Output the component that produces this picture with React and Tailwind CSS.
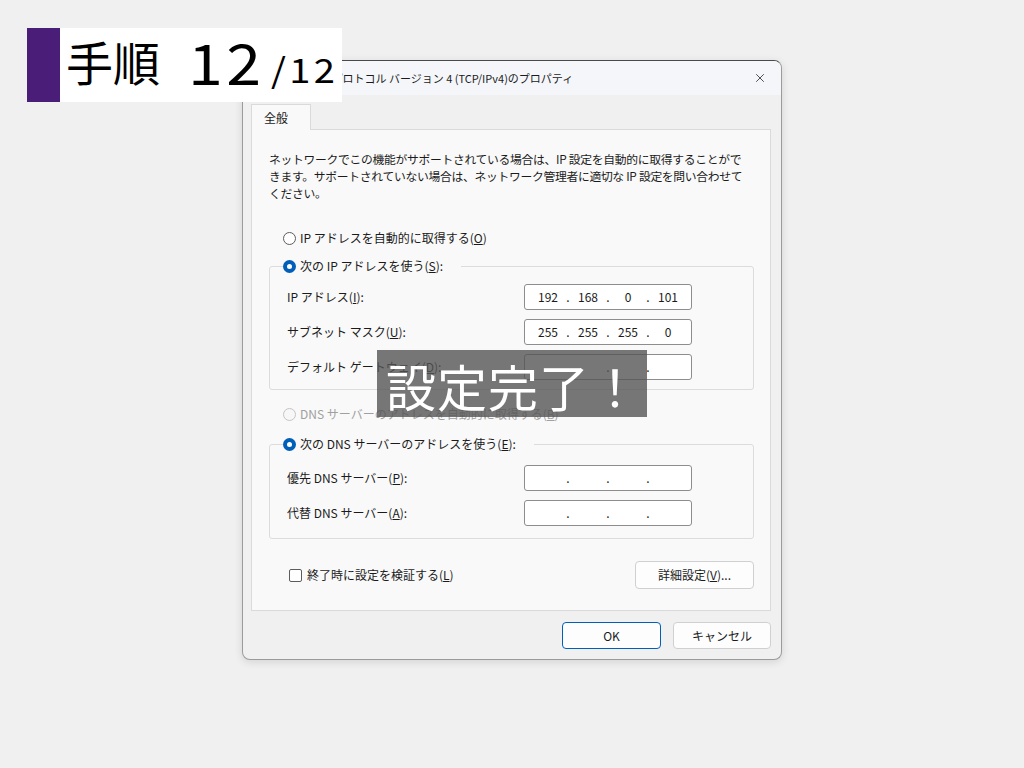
import { X } from "lucide-react";

const jp = "font-['Noto_Sans_CJK_JP',sans-serif]";

const Radio = ({ checked, disabled }) =>
  checked ? (
    <span className="flex h-[13px] w-[13px] shrink-0 items-center justify-center rounded-full bg-[#005fb8]">
      <span className="h-[5px] w-[5px] rounded-full bg-white" />
    </span>
  ) : (
    <span
      className={
        disabled
          ? "h-[13px] w-[13px] shrink-0 rounded-full border border-[#c4c4c4] bg-[#f7f7f7]"
          : "h-[13px] w-[13px] shrink-0 rounded-full border border-[#5c5c5c] bg-white"
      }
    />
  );

const IpBox = ({ parts = ["", "", "", ""] }) => (
  <div className="flex h-[26px] w-[168px] items-center rounded-[3px] border border-[#8d8d8d] bg-white pl-[6px] text-[12px] text-[#1b1b1b]">
    {parts.map((p, i) => (
      <div key={i} className="flex items-center">
        <span className="w-[34px] text-center">{p}</span>
        {i < 3 && <span className="w-[6px] text-center">.</span>}
      </div>
    ))}
  </div>
);

const Row = ({ label, u, rest, parts }) => (
  <div className="flex h-[26px] items-center">
    <span className="w-[237px]">
      {label}(<span className="underline">{u}</span>){rest}
    </span>
    <IpBox parts={parts} />
  </div>
);

const App = () => {
  return (
    <div className={`relative h-[768px] w-[1024px] overflow-hidden bg-[#f0f0f0] ${jp} text-[12px] text-[#1b1b1b]`}>
      {/* dialog */}
      <div className="ml-[242px] pt-[60px]">
        <div className="flex h-[600px] w-[540px] flex-col overflow-hidden rounded-[8px] border border-[#9b9b9b] border-t-[#4a4a4a] bg-[#f0f0f0] shadow-[0_2px_8px_rgba(0,0,0,0.12)]">
          <div className="flex h-[34px] shrink-0 items-center justify-between bg-[#f4f6fa] pl-[9px] pr-[14px]">
            <span className="text-[11px] leading-none">インターネット プロトコル バージョン 4 (TCP/IPv4)のプロパティ</span>
            <X className="h-[14px] w-[14px] text-[#1b1b1b]" strokeWidth={1.3} />
          </div>

          <div className="flex flex-1 flex-col pl-[8px] pr-[10px] pt-[9px]">
            <div className="relative z-10 -mb-px flex h-[26px] w-[60px] items-center justify-center border border-b-0 border-[#dadada] bg-[#f9f9f9] pr-[10px]">
              全般
            </div>
            <div className="h-[482px] border border-[#dadada] bg-[#f9f9f9] pl-[17px] pr-[16px] pt-[20px]">
              <p className="whitespace-nowrap text-[11.8px] leading-[17px] tracking-[-0.3px]">
                ネットワークでこの機能がサポートされている場合は、IP 設定を自動的に取得することがで
                <br />
                きます。サポートされていない場合は、ネットワーク管理者に適切な IP 設定を問い合わせて
                <br />
                ください。
              </p>

              <div className="mt-[27px] flex h-[20px] items-center gap-[4px] pl-[14px]">
                <Radio />
                <span>
                  IP アドレスを自動的に取得する(<span className="underline">O</span>)
                </span>
              </div>

              <fieldset className="mt-[8px] rounded-[3px] border border-[#dcdcdc] pb-[9px] pl-[17px]">
                <legend className="-ml-[4px] flex h-[20px] items-center gap-[4px] pr-[18px]">
                  <Radio checked />
                  <span>
                    次の IP アドレスを使う(<span className="underline">S</span>):
                  </span>
                </legend>
                <div className="mt-[8px] flex flex-col gap-[9px]">
                  <Row label="IP アドレス" u="I" rest=":" parts={["192", "168", "0", "101"]} />
                  <Row label="サブネット マスク" u="U" rest=":" parts={["255", "255", "255", "0"]} />
                  <Row label="デフォルト ゲートウェイ" u="D" rest=":" />
                </div>
              </fieldset>

              <div className="mt-[14px] flex h-[20px] items-center gap-[4px] pl-[14px] text-[#a0a0a0]">
                <Radio disabled />
                <span>
                  DNS サーバーのアドレスを自動的に取得する(<span className="underline">B</span>)
                </span>
              </div>

              <fieldset className="mt-[10px] rounded-[3px] border border-[#dcdcdc] pb-[12px] pl-[17px]">
                <legend className="-ml-[4px] flex h-[20px] items-center gap-[4px] pr-[18px]">
                  <Radio checked />
                  <span>
                    次の DNS サーバーのアドレスを使う(<span className="underline">E</span>):
                  </span>
                </legend>
                <div className="mt-[11px] flex flex-col gap-[9px]">
                  <Row label="優先 DNS サーバー" u="P" rest=":" />
                  <Row label="代替 DNS サーバー" u="A" rest=":" />
                </div>
              </fieldset>

              <div className="mt-[22px] flex items-center justify-between pl-[20px]">
                <div className="flex items-center gap-[5px]">
                  <span className="h-[13px] w-[13px] rounded-[2px] border border-[#5c5c5c] bg-white" />
                  <span>
                    終了時に設定を検証する(<span className="underline">L</span>)
                  </span>
                </div>
                <button className="h-[28px] w-[119px] rounded-[4px] border border-[#d0d0d0] bg-[#fdfdfd]">
                  詳細設定(<span className="underline">V</span>)...
                </button>
              </div>
            </div>

            <div className="mt-[11px] flex justify-end gap-[12px]">
              <button className="h-[27px] w-[99px] rounded-[4px] border border-[#005fb8] bg-[#fdfdfd]">OK</button>
              <button className="h-[27px] w-[98px] rounded-[4px] border border-[#d0d0d0] bg-[#fdfdfd]">キャンセル</button>
            </div>
          </div>
        </div>
      </div>

      {/* step label */}
      <div className="absolute left-[27px] top-[28px] flex h-[74px]">
        <div className="w-[33px] bg-[#4a1e78]" />
        <div className="flex w-[282px] items-end bg-white pb-[18px] pl-[6px] text-black">
          <span className="text-[47px] leading-none">手順</span>
          <span className="ml-[28px] inline-block origin-left scale-x-[1.12] text-[56px] leading-[0.84] tracking-[3px]">12</span>
          <span className="ml-[15px] inline-block origin-left scale-x-[1.12] text-[34px] leading-[0.84] tracking-[3px]">/12</span>
        </div>
      </div>

      {/* overlay */}
      <div className="absolute left-[377px] top-[350px] flex h-[67px] w-[270px] items-center bg-[#555555]/80 pl-[9px] pt-[2px] text-[50px] leading-none tracking-[1px] text-white">
        設定完了！
      </div>
    </div>
  );
};

export default App;
